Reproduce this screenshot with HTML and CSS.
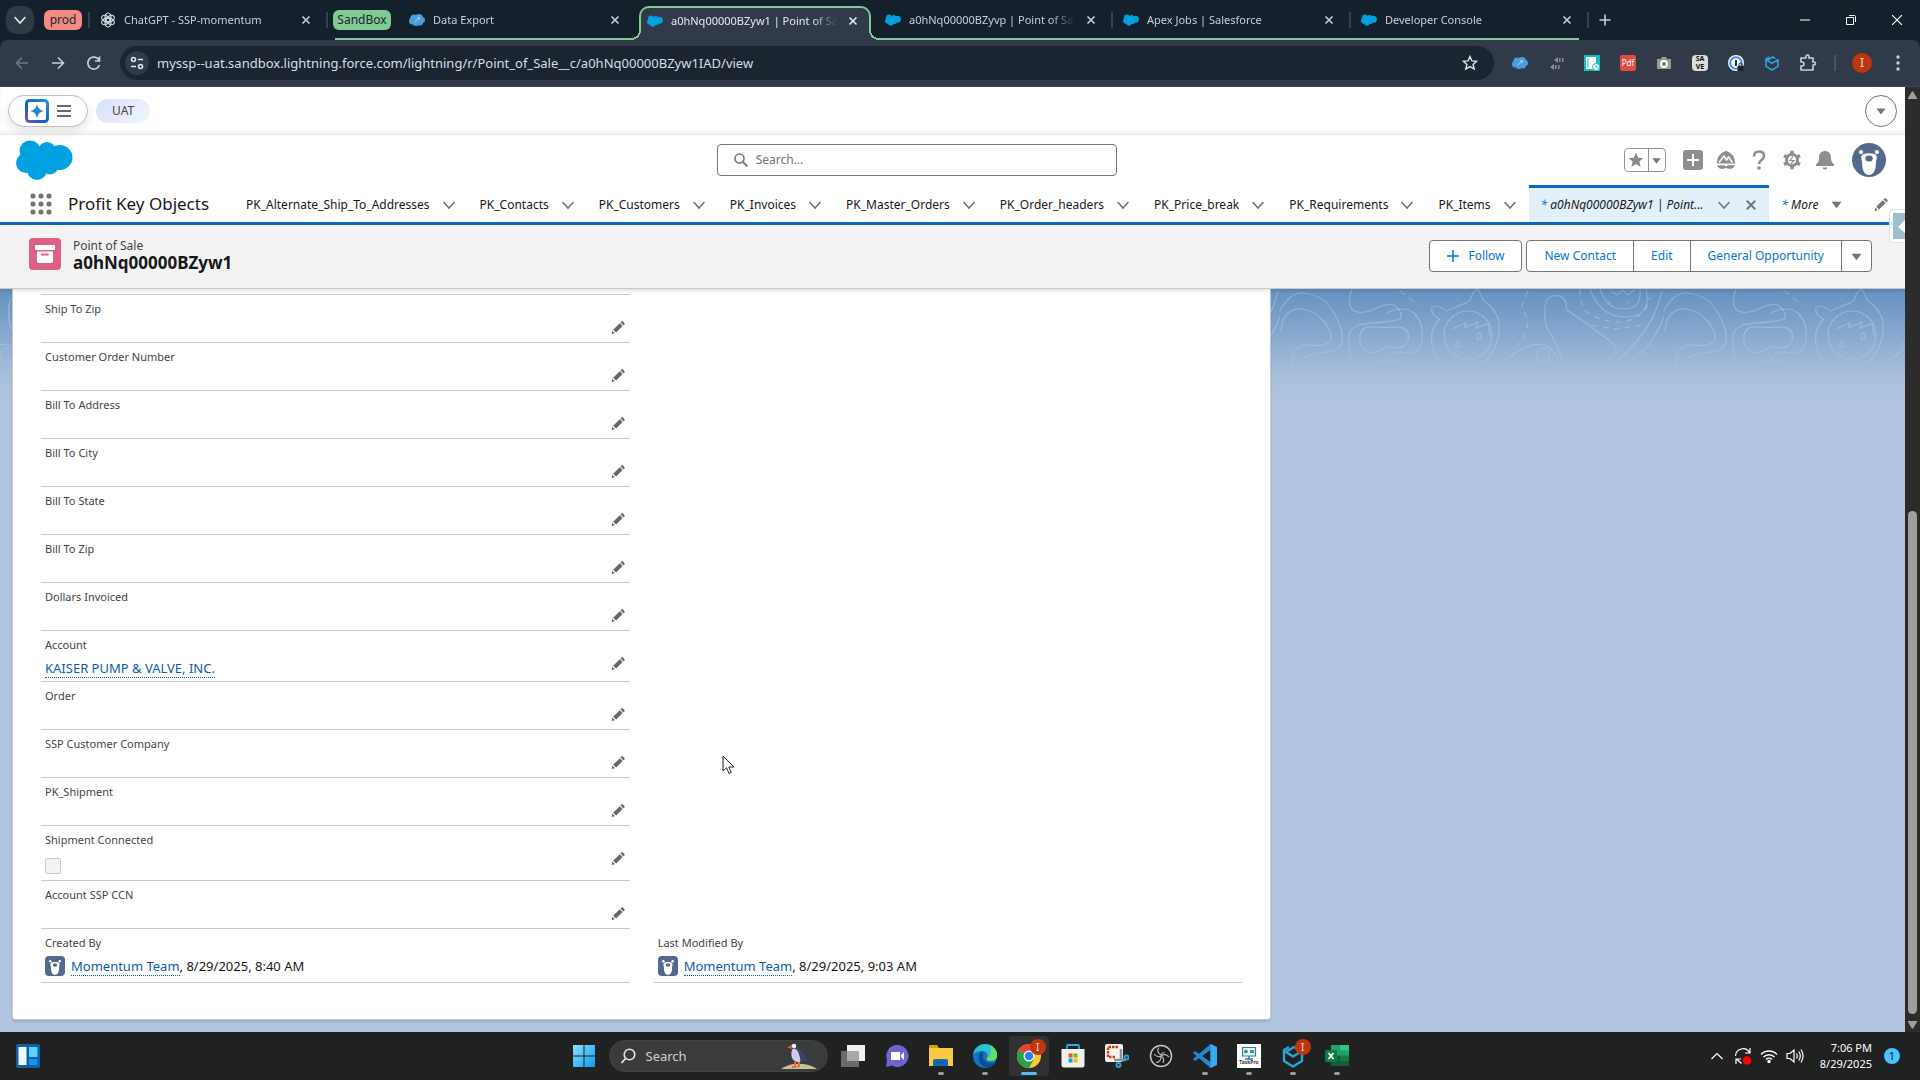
FILE: index.html
```
<!DOCTYPE html>
<html lang="en">
<head>
    <meta charset="UTF-8">
    <meta name="viewport" content="width=device-width, initial-scale=1.0">
    <title>a0hNq00000BZyw1 | Point of Sale | Salesforce</title>
    <link rel="stylesheet" href="styles.css">
</head>
<body>

<!-- Shared icons -->
<svg class="sprite" aria-hidden="true">
    <symbol id="cloud" viewBox="0 0 57 40">
        <g fill="#00a1e0"><circle cx="14" cy="11" r="10.5"/><circle cx="31" cy="11" r="9"/><circle cx="44" cy="17.500" r="12.500"/><circle cx="10" cy="23" r="10"/><circle cx="21" cy="30" r="10"/><circle cx="34" cy="26" r="8.500"/><path d="M12 10h28v18H12z"/></g>
    </symbol>
    <symbol id="inspector" viewBox="0 0 16 16">
        <g fill="#4b9ddb"><circle cx="5" cy="6" r="3.500"/><circle cx="10" cy="6" r="4"/><circle cx="13" cy="8" r="3"/><circle cx="3.500" cy="9" r="3.500"/><circle cx="7" cy="10.500" r="3.500"/><circle cx="11" cy="10.500" r="3"/></g>
        <path d="M6 10l4-4M8 6l2.500-.5L10 8" fill="none" stroke="#a9d5f5"/>
    </symbol>
    <symbol id="close" viewBox="0 0 10 10"><path d="M1.500 1.500l7 7M8.500 1.500l-7 7" fill="none" stroke="currentColor" stroke-width="1.600"/></symbol>
    <symbol id="chevron" viewBox="0 0 12 12"><path d="M1 3.500l5 5.500 5-5.500" fill="none" stroke="currentColor" stroke-width="1.600" stroke-linecap="round"/></symbol>
    <symbol id="caret" viewBox="0 0 10 10"><path d="M.5 2.500h9L5 8.500z" fill="currentColor"/></symbol>
    <symbol id="pencil" viewBox="0 0 14 14"><path d="M.7 13.300l.6-3.600L3.800 12zM2.200 8.800L8.700 2.200l2.900 2.900-6.500 6.500zM9.500 1.500l.9-.9c.5-.5 1-.5 1.400-.1l1.600 1.600c.4.4.4 1 0 1.400l-.9.9z" fill="currentColor"/></symbol>
    <symbol id="bear" viewBox="0 0 32 32">
        <path d="M0 0h32v32H0z" fill="#54698d"/>
        <g fill="#fff"><circle cx="8.500" cy="8.500" r="2"/><circle cx="23.500" cy="8.500" r="2"/><path d="M9 12c2-3 12-3 14 0 1 2-.5 4-.5 7 0 6-2 11-6.500 11S9.500 25 9.500 19c0-3-1.500-5-.5-7z"/></g>
        <ellipse cx="16" cy="14.500" rx="3.500" ry="2.800" fill="#54698d"/>
    </symbol>
    <symbol id="cube" viewBox="0 0 24 24"><path d="M8 3L3 6v11l9 5.500 9-5.500V7l-9 5.500L5 8l8-5 4 2.500" fill="none" stroke="#28a6dc" stroke-width="2.400" stroke-linejoin="round"/></symbol>
</svg>

<!-- Browser -->
<header class="browser">
    <div class="tab-strip">
        <button class="tab-search" aria-label="Search tabs"><svg width="12" height="12"><use href="#chevron"/></svg></button>
        <button class="chip chip-prod">prod</button>
        <i class="tab-sep"></i>
        <div class="tab">
            <svg class="fav" viewBox="0 0 16 16"><g fill="none" stroke="#d5dae2" stroke-width="1.200"><ellipse cx="8" cy="5.500" rx="3" ry="4.500"/><ellipse cx="8" cy="5.500" rx="3" ry="4.500" transform="rotate(60 8 8)"/><ellipse cx="8" cy="5.500" rx="3" ry="4.500" transform="rotate(120 8 8)"/><ellipse cx="8" cy="10.500" rx="3" ry="4.500"/><ellipse cx="8" cy="10.500" rx="3" ry="4.500" transform="rotate(60 8 8)"/><ellipse cx="8" cy="10.500" rx="3" ry="4.500" transform="rotate(120 8 8)"/></g></svg>
            <span class="tab-title">ChatGPT - SSP-momentum</span>
            <button class="tab-close" aria-label="Close"><svg width="10" height="10"><use href="#close"/></svg></button>
        </div>
        <i class="tab-sep"></i>
        <div class="tab-group">
            <button class="chip chip-sandbox">SandBox</button>
            <div class="tab">
                <svg class="fav"><use href="#inspector"/></svg>
                <span class="tab-title">Data Export</span>
                <button class="tab-close" aria-label="Close"><svg width="10" height="10"><use href="#close"/></svg></button>
            </div>
            <div class="tab active">
                <svg class="fav"><use href="#cloud"/></svg>
                <span class="tab-title">a0hNq00000BZyw1 | Point of Sa</span>
                <button class="tab-close" aria-label="Close"><svg width="10" height="10"><use href="#close"/></svg></button>
            </div>
            <div class="tab">
                <svg class="fav"><use href="#cloud"/></svg>
                <span class="tab-title">a0hNq00000BZyvp | Point of Sa</span>
                <button class="tab-close" aria-label="Close"><svg width="10" height="10"><use href="#close"/></svg></button>
            </div>
            <i class="tab-sep"></i>
            <div class="tab">
                <svg class="fav"><use href="#cloud"/></svg>
                <span class="tab-title">Apex Jobs | Salesforce</span>
                <button class="tab-close" aria-label="Close"><svg width="10" height="10"><use href="#close"/></svg></button>
            </div>
            <i class="tab-sep"></i>
            <div class="tab last">
                <svg class="fav"><use href="#cloud"/></svg>
                <span class="tab-title">Developer Console</span>
                <button class="tab-close" aria-label="Close"><svg width="10" height="10"><use href="#close"/></svg></button>
            </div>
        </div>
        <i class="tab-sep"></i>
        <button class="new-tab" aria-label="New tab"><svg width="12" height="12" viewBox="0 0 12 12"><path d="M6 .5v11M.5 6h11" stroke="currentColor" stroke-width="1.600"/></svg></button>
        <div class="window-buttons">
            <button aria-label="Minimize"><svg width="10" height="10" viewBox="0 0 10 10"><path d="M0 5h10" stroke="#fff"/></svg></button>
            <button aria-label="Restore"><svg width="10" height="10" viewBox="0 0 10 10"><path d="M.5 2.500h7v7h-7zM3 .5h5.500q1 0 1 1V7" fill="none" stroke="#fff"/></svg></button>
            <button aria-label="Close window"><svg width="10" height="10" viewBox="0 0 10 10"><path d="M0 0l10 10M10 0L0 10" stroke="#fff" stroke-width="1.200"/></svg></button>
        </div>
    </div>

    <div class="toolbar">
        <button class="tool dim" aria-label="Back"><svg width="14" height="14" viewBox="0 0 14 14"><path d="M13 7H1.500M7 1.500L1.500 7 7 12.500" fill="none" stroke="currentColor" stroke-width="1.600"/></svg></button>
        <button class="tool" aria-label="Forward"><svg width="14" height="14" viewBox="0 0 14 14"><path d="M1 7h11.500M7 1.500L12.500 7 7 12.500" fill="none" stroke="currentColor" stroke-width="1.600"/></svg></button>
        <button class="tool" aria-label="Reload"><svg width="14" height="14" viewBox="0 0 14 14"><path d="M12 4A6 6 0 1 0 12.500 9M12.500 .5V5H8" fill="none" stroke="currentColor" stroke-width="1.700"/></svg></button>
        <div class="omnibox">
            <button class="site-info" aria-label="Site information"><svg width="14" height="14" viewBox="0 0 14 14"><g fill="none" stroke="#dfe4ec" stroke-width="1.600"><circle cx="3.500" cy="3.500" r="2"/><path d="M8 3.500h5M1 10.500h5"/><circle cx="10.500" cy="10.500" r="2"/></g></svg></button>
            <input type="text" aria-label="Address" value="myssp--uat.sandbox.lightning.force.com/lightning/r/Point_of_Sale__c/a0hNq00000BZyw1IAD/view">
            <button class="bookmark" aria-label="Bookmark"><svg width="16" height="16" viewBox="0 0 16 16"><path d="M8 1.500l1.900 4.400 4.800.4-3.600 3.100 1.100 4.700L8 11.600l-4.200 2.500 1.100-4.700L1.300 6.300l4.800-.4z" fill="none" stroke="#dfe4ec" stroke-width="1.400"/></svg></button>
        </div>
        <div class="extensions">
            <button aria-label="Salesforce Inspector"><svg width="16" height="16"><use href="#inspector"/></svg></button>
            <button aria-label="Code"><svg width="16" height="16" viewBox="0 0 16 16"><path d="M10 2L6 5l4 3zM6 9l-4 3 4 3zM11 3h1.500v4H11zM14 3h1.500v4H14zM7 10h1.500v4H7zM10 10h1.500v4H10z" fill="#8d8d8d"/></svg></button>
            <button aria-label="Tab saver"><svg width="16" height="16" viewBox="0 0 16 16"><path d="M0 0h16v16H0z" fill="#12bdc2"/><path d="M2 2h10v12H2z" fill="#fff"/><path d="M4 3v10" stroke="#12bdc2"/><circle cx="12" cy="12" r="3.500" fill="#fff" stroke="#12bdc2"/><path d="M12 10v2h2" fill="none" stroke="#12bdc2"/></svg></button>
            <button class="ext-pdf">Pdf</button>
            <button aria-label="Screenshot"><svg width="16" height="16" viewBox="0 0 16 16"><path d="M1 4h3.500L6 2h4l1.500 2H15v10H1z" fill="#999"/><circle cx="8" cy="9" r="3" fill="#777" stroke="#fff" stroke-width="1.800"/></svg></button>
            <button class="ext-save">SA<br>VE</button>
            <button aria-label="Password manager"><svg width="16" height="16" viewBox="0 0 16 16"><circle cx="8" cy="8" r="8" fill="#fff"/><circle cx="8" cy="8" r="5.800" fill="#fff" stroke="#3b8ee6" stroke-width="2"/><path d="M8 5v6" stroke="#234" stroke-width="2"/><path d="M9.500 11h6v5h-6z" fill="#222"/><path d="M11 11V9.500a1.500 1.500 0 0 1 3 0V11" fill="none" stroke="#222"/></svg></button>
            <button aria-label="Cube"><svg width="16" height="16"><use href="#cube"/></svg></button>
            <button aria-label="Extensions"><svg width="18" height="18" viewBox="0 0 18 18"><path d="M2 4h5V2.500a1.500 1.500 0 0 1 3 0V4h4v4h1a1.500 1.500 0 0 1 0 3h-1v5H2v-4h1a2 2 0 0 0 0-4H2z" fill="none" stroke="#c5cfdd" stroke-width="1.600"/></svg></button>
        </div>
        <i class="tool-sep"></i>
        <button class="profile">I</button>
        <button class="kebab" aria-label="Menu"><svg width="4" height="16" viewBox="0 0 4 16"><g fill="#c5cfdd"><circle cx="2" cy="2" r="1.700"/><circle cx="2" cy="8" r="1.700"/><circle cx="2" cy="14" r="1.700"/></g></svg></button>
    </div>
</header>

<!-- Web page -->
<div class="viewport">
    <div class="page">
        <div class="org-bar">
            <button class="org-menu" aria-label="Organization menu">
                <svg width="24" height="24" viewBox="0 0 24 24"><defs><linearGradient id="og" x1="0" y1="1" x2="1" y2="0"><stop offset="0" stop-color="#7e4cc0"/><stop offset=".4" stop-color="#0b5fd0"/><stop offset="1" stop-color="#2c8fd5"/></linearGradient></defs><rect x="1.500" y="1.500" width="21" height="21" rx="3" fill="#fff" stroke="url(#og)" stroke-width="3"/><path d="M12 5q1 6 7 7-6 1-7 7-1-6-7-7 6-1 7-7z" fill="#2586d9"/></svg>
                <svg width="14" height="14" viewBox="0 0 14 14"><path d="M0 2h14M0 7h14M0 12h14" stroke="#6b6b6b" stroke-width="2"/></svg>
            </button>
            <span class="org-chip">UAT</span>
            <button class="org-toggle" aria-label="Collapse"><svg width="10" height="10"><use href="#caret"/></svg></button>
        </div>

        <div class="sf-header">
            <div><svg class="logo" width="57" height="40"><use href="#cloud"/></svg></div>
            <label class="search">
                <svg width="14" height="14" viewBox="0 0 14 14"><circle cx="5.500" cy="5.500" r="4.500" fill="none" stroke="#747474" stroke-width="1.600"/><path d="M9 9l4.500 4.500" stroke="#747474" stroke-width="1.800"/></svg>
                <input type="search" placeholder="Search..." aria-label="Search">
            </label>
            <div class="global-actions">
                <div class="fav-group">
                    <button aria-label="Favorite"><svg width="16" height="16" viewBox="0 0 16 16"><path d="M8 .5l2.100 5.200 5.400.3-4.200 3.500 1.400 5.500L8 12l-4.700 3 1.400-5.500L.5 6l5.400-.3z" fill="#8a8a8a"/></svg></button>
                    <button aria-label="Favorites list"><svg width="9" height="9"><use href="#caret"/></svg></button>
                </div>
                <button aria-label="Create"><svg width="20" height="20" viewBox="0 0 20 20"><rect width="20" height="20" rx="3" fill="#8e8e8e"/><path d="M10 4v12M4 10h12" stroke="#fff" stroke-width="2"/></svg></button>
                <button aria-label="Guidance"><svg width="20" height="20" viewBox="0 0 20 20"><path d="M.8 13.500Q1 4 10 .8q9 3.200 9.200 12.700z" fill="#8e8e8e"/><path d="M3 12.500L8 6l2.500 4L12.500 7l4 5.500" fill="none" stroke="#fff" stroke-width="1.500"/><path d="M1 15.200h7l2 1.300 2-1.300h7q-1 2.500-3 3.500h-4l-2-1-2 1H4q-2-1-3-3.500z" fill="#8e8e8e"/></svg></button>
                <button aria-label="Help"><svg width="20" height="20" viewBox="0 0 20 20"><path d="M5 6.500C5 3 7 1.500 10 1.500s5 1.800 5 4.500c0 4-5 4-5 8" fill="none" stroke="#8e8e8e" stroke-width="2.600"/><circle cx="10" cy="18" r="1.800" fill="#8e8e8e"/></svg></button>
                <button aria-label="Setup"><svg width="20" height="20" viewBox="0 0 20 20"><circle cx="10" cy="10" r="5.500" fill="none" stroke="#8e8e8e" stroke-width="3"/><path d="M10 .8v4M10 15.200v4M2 5.400l3.500 2M14.500 12.600l3.500 2M2 14.600l3.500-2M14.500 7.400l3.500-2" stroke="#8e8e8e" stroke-width="3.500"/><path d="M11 6.500l-3 4h4L9 13.500" fill="none" stroke="#8e8e8e" stroke-width="1.200"/></svg></button>
                <button aria-label="Notifications"><svg width="20" height="20" viewBox="0 0 20 20"><path d="M10 1c4 0 6 3 6 6.500 0 4 1 5 3 7v1.500H1v-1.500c2-2 3-3 3-7C4 4 6 1 10 1zM7.500 17.500h5q-.5 2-2.500 2t-2.500-2z" fill="#8e8e8e"/></svg></button>
                <button class="user" aria-label="User"><svg width="34" height="34"><use href="#bear"/></svg></button>
            </div>
        </div>

        <nav class="sf-nav">
            <button class="waffle" aria-label="App launcher"><svg width="22" height="22" viewBox="0 0 22 22"><g fill="#747474"><circle cx="3" cy="3" r="2.600"/><circle cx="11" cy="3" r="2.600"/><circle cx="19" cy="3" r="2.600"/><circle cx="3" cy="11" r="2.600"/><circle cx="11" cy="11" r="2.600"/><circle cx="19" cy="11" r="2.600"/><circle cx="3" cy="19" r="2.600"/><circle cx="11" cy="19" r="2.600"/><circle cx="19" cy="19" r="2.600"/></g></svg></button>
            <span class="app-name">Profit Key Objects</span>
            <a class="nav-item" href="#">PK_Alternate_Ship_To_Addresses <svg width="12" height="12"><use href="#chevron"/></svg></a>
            <a class="nav-item" href="#">PK_Contacts <svg width="12" height="12"><use href="#chevron"/></svg></a>
            <a class="nav-item" href="#">PK_Customers <svg width="12" height="12"><use href="#chevron"/></svg></a>
            <a class="nav-item" href="#">PK_Invoices <svg width="12" height="12"><use href="#chevron"/></svg></a>
            <a class="nav-item" href="#">PK_Master_Orders <svg width="12" height="12"><use href="#chevron"/></svg></a>
            <a class="nav-item" href="#">PK_Order_headers <svg width="12" height="12"><use href="#chevron"/></svg></a>
            <a class="nav-item" href="#">PK_Price_break <svg width="12" height="12"><use href="#chevron"/></svg></a>
            <a class="nav-item" href="#">PK_Requirements <svg width="12" height="12"><use href="#chevron"/></svg></a>
            <a class="nav-item" href="#">PK_Items <svg width="12" height="12"><use href="#chevron"/></svg></a>
            <a class="nav-item current" href="#"><span><b>*</b> a0hNq00000BZyw1 | Point...</span> <svg width="12" height="12"><use href="#chevron"/></svg><svg width="12" height="12"><use href="#close"/></svg></a>
            <a class="nav-item more" href="#"><span><b>*</b> More</span> <svg width="11" height="11"><use href="#caret"/></svg></a>
            <button class="nav-edit" aria-label="Edit nav items"><svg width="14" height="14"><use href="#pencil"/></svg></button>
            <button class="side-tab" aria-label="Open panel"><svg width="12" height="26" viewBox="0 0 12 26"><path d="M0 0h12v26H0z" fill="#9dbfd0"/><path d="M12 7l-7 7 7 6z" fill="#fff"/></svg></button>
        </nav>

        <div class="record-header">
            <svg class="record-icon" width="32" height="32" viewBox="0 0 32 32"><rect width="32" height="32" rx="4" fill="#dd6085"/><rect x="6" y="7" width="20" height="5" rx="1" fill="#fff"/><path d="M8 13.500h16V23q0 2-2 2H10q-2 0-2-2z" fill="#fff"/><path d="M13 16.500h6" stroke="#dd6085" stroke-width="2" stroke-linecap="round"/></svg>
            <div class="record-name">
                <p>Point of Sale</p>
                <h1>a0hNq00000BZyw1</h1>
            </div>
            <button class="btn follow"><svg width="12" height="12" viewBox="0 0 12 12"><path d="M6 0v12M0 6h12" stroke="#0176d3" stroke-width="1.500"/></svg>Follow</button>
            <div class="btn-group">
                <button class="btn">New Contact</button>
                <button class="btn">Edit</button>
                <button class="btn">General Opportunity</button>
                <button class="btn btn-more" aria-label="More actions"><svg width="11" height="11"><use href="#caret"/></svg></button>
            </div>
        </div>

        <main class="record-body">
            <svg class="backdrop" width="100%" height="107" aria-hidden="true">
                <defs>
                    <pattern id="contours" x="128" y="0" width="384" height="107" patternUnits="userSpaceOnUse">
                        <g fill="none" stroke="#fff" stroke-opacity=".24" stroke-width="1.200">
                            <path d="M-4 30Q8 2 24 4q18 2 26 14c12 16 16 34 8 42-8 6-40 0-38 20 2 12 12 16 10 30"/>
                            <path d="M1 42q2-24 22-22c14 2 26 16 28 26 2 8-8 12-20 10-20-2-22 18-16 30q4 8 2 24"/>
                            <path d="M72 0q-6 16 2 22c14 6 28-10 40-6q10 8 6 14c-12 6-46 0-50 14s2 20 0 30q-4 14-20 20"/>
                            <path d="M80 46q2-10 16-8c10 2 28-4 32 6 2 8-4 18-16 14-10-2-12 8-22 6q-10-4-10-12z"/>
                            <path d="M106 24q18-8 28 0 10 10 8 26-2 16-16 14c-14-4-24 8-20 14s22-2 32 4q8 8 6 26"/>
                            <path d="M98 74c14-8 20 2 34 2q8 6 4 14c-10 6-20-2-34 0q-8-4-4-16zM28 110q0-16 12-16t14 16M64 108q2-14 14-14t14 14"/>
                            <path d="M160 30q-10-4-8-12 8-2 14 4l24-10q2-10 8-12l6 12q20 14 14 38c-6 22-22 34-42 30-18-4-26-18-24-36q2-8 8-14z"/>
                            <circle cx="188" cy="46" r="24"/>
                            <path d="M172 40l14-6-2 5 14-6-2 6 12-4 2 12M179 52q-3 0-3 4t3 2 0-6M200 44q-3 0-3 4t3 2 0-6"/>
                            <path d="M120 2l18 14M218 98q12-14 14-30l8-16q10-10 6-24l-4-12 6-14" stroke-dasharray="6 5"/>
                            <path d="M200 104q20-30 32-38 30-20 42-2 14 20-2 32l-24 14"/>
                            <circle cx="263" cy="66" r="6.500"/>
                            <path d="M266 12q6-8 16-4 6 6 4 12c8 8 24 14 30 22 12 8 22 14 20 22l-16 16c-10 10-20 16-28 14-10-20-12-34-22-50q-8-12-4-32z"/>
                            <path d="M310 0q10 28 36 28T366 0"/><path d="M320 0q6 20 24 20T360 0M331 2l6 4 6-5 5 5 6-5M330 12v4M348 12v4"/>
                            <path d="M300 0q0 18 8 24 20 12 38 8 20-4 24-24M312 36l24 4 26-4" stroke-dasharray="6 5"/>
                            <path d="M326 107q4-30 26-50 22-22 30-55M336 107q2-26 28-46 10-8 24-42"/>
                        </g>
                    </pattern>
                    <linearGradient id="sky" x1="0" y1="0" x2="0" y2="1"><stop offset="0" stop-color="#6491c1"/><stop offset=".8" stop-color="#a6bedc"/><stop offset="1" stop-color="#b0c4df"/></linearGradient>
                    <linearGradient id="fade" x1="0" y1="0" x2="0" y2="1"><stop offset="0" stop-color="#fff"/><stop offset=".4" stop-color="#fff"/><stop offset=".82" stop-color="#000"/></linearGradient>
                    <mask id="fademask"><rect width="100%" height="107" fill="url(#fade)"/></mask>
                </defs>
                <rect width="100%" height="107" fill="url(#sky)"/>
                <rect width="100%" height="107" fill="url(#contours)" mask="url(#fademask)"/>
            </svg>

            <section class="card">
                <div class="field"><span class="label">Ship To Zip</span><button aria-label="Edit Ship To Zip"><svg width="14" height="14"><use href="#pencil"/></svg></button></div>
                <div class="field"><span class="label">Customer Order Number</span><button aria-label="Edit Customer Order Number"><svg width="14" height="14"><use href="#pencil"/></svg></button></div>
                <div class="field"><span class="label">Bill To Address</span><button aria-label="Edit Bill To Address"><svg width="14" height="14"><use href="#pencil"/></svg></button></div>
                <div class="field"><span class="label">Bill To City</span><button aria-label="Edit Bill To City"><svg width="14" height="14"><use href="#pencil"/></svg></button></div>
                <div class="field"><span class="label">Bill To State</span><button aria-label="Edit Bill To State"><svg width="14" height="14"><use href="#pencil"/></svg></button></div>
                <div class="field"><span class="label">Bill To Zip</span><button aria-label="Edit Bill To Zip"><svg width="14" height="14"><use href="#pencil"/></svg></button></div>
                <div class="field"><span class="label">Dollars Invoiced</span><button aria-label="Edit Dollars Invoiced"><svg width="14" height="14"><use href="#pencil"/></svg></button></div>
                <div class="field"><span class="label">Account</span><div class="value"><a href="#">KAISER PUMP &amp; VALVE, INC.</a></div><button aria-label="Edit Account"><svg width="14" height="14"><use href="#pencil"/></svg></button></div>
                <div class="field"><span class="label">Order</span><button aria-label="Edit Order"><svg width="14" height="14"><use href="#pencil"/></svg></button></div>
                <div class="field"><span class="label">SSP Customer Company</span><button aria-label="Edit SSP Customer Company"><svg width="14" height="14"><use href="#pencil"/></svg></button></div>
                <div class="field"><span class="label">PK_Shipment</span><button aria-label="Edit PK_Shipment"><svg width="14" height="14"><use href="#pencil"/></svg></button></div>
                <div class="field"><label class="label" for="shipment-connected">Shipment Connected</label><div class="value check"><input type="checkbox" id="shipment-connected" disabled></div><button aria-label="Edit Shipment Connected"><svg width="14" height="14"><use href="#pencil"/></svg></button></div>
                <div class="field"><span class="label">Account SSP CCN</span><button aria-label="Edit Account SSP CCN"><svg width="14" height="14"><use href="#pencil"/></svg></button></div>
                <div class="field"><span class="label">Created By</span><div class="value person"><svg width="20" height="20"><use href="#bear"/></svg><span><a href="#">Momentum Team</a>, 8/29/2025, 8:40 AM</span></div></div>
                <div class="field right"><span class="label">Last Modified By</span><div class="value person"><svg width="20" height="20"><use href="#bear"/></svg><span><a href="#">Momentum Team</a>, 8/29/2025, 9:03 AM</span></div></div>
            </section>
        </main>
    </div>

    <div class="scrollbar">
        <svg width="11" height="9" viewBox="0 0 11 9"><path d="M4.500 1q1-1.500 2 0L10.500 8h-10z" fill="#9f9f9f"/></svg>
        <div class="track"><div class="thumb"></div></div>
        <svg width="11" height="9" viewBox="0 0 11 9"><path d="M4.500 8q1 1.500 2 0L10.500 1h-10z" fill="#9f9f9f"/></svg>
    </div>

    <svg class="pointer" width="13" height="20" viewBox="0 0 13 20"><path d="M1 1v15l3.500-3.200L7 18.500l2.200-1L6.800 12H12z" fill="#fff" stroke="#222"/></svg>
</div>

<!-- Taskbar -->
<footer class="taskbar">
    <div class="task-left">
        <button aria-label="Widgets"><svg width="24" height="24" viewBox="0 0 24 24"><rect width="24" height="24" rx="2" fill="#0b62a8"/><path d="M2.500 3h8v18h-8z" fill="#f2f7fb"/><path d="M13 3h8.500v10H13z" fill="#5fd0ff"/><path d="M13 15h8.500v6H13z" fill="#1592ea"/></svg></button>
    </div>

    <div class="task-center">
        <button class="task" aria-label="Start"><svg width="24" height="24" viewBox="0 0 24 24"><defs><linearGradient id="win" x1="0" y1="0" x2="1" y2="1"><stop offset="0" stop-color="#8be0fb"/><stop offset="1" stop-color="#0a9cf5"/></linearGradient></defs><path d="M1 1h10.500v10.500H1zM12.500 1H23v10.500H12.500zM1 12.500h10.500V23H1zM12.500 12.500H23V23H12.500z" fill="url(#win)"/></svg></button>
        <label class="task-search">
            <svg width="16" height="16" viewBox="0 0 16 16"><circle cx="9.500" cy="6.500" r="5.300" fill="none" stroke="#e6e6e6" stroke-width="1.600"/><path d="M5.500 10.500L1.500 15" stroke="#e6e6e6" stroke-width="1.800"/></svg>
            <input type="text" placeholder="Search" aria-label="Search Windows">
            <svg width="36" height="28" viewBox="0 0 36 28"><path d="M0 27q4-3 12-5 16-1 24 5z" fill="#cdbd98"/><path d="M11 2c3-2 6 0 6 4 5 3 8 8 10 14l-5-1c-2 4-9 4-11-2-2-5 0-9 0-15z" fill="#3d4560"/><path d="M11.500 7c3-1 5 1 6 4s3 8 1 9c-7 1-10-7-7-13z" fill="#d4c8ee"/><circle cx="13" cy="4" r="2.200" fill="#f2f2f5"/><path d="M11 2.500L6.500 5.500l4 1.500z" fill="#f05a32"/><path d="M14 20v5M18 20v4M11 25h4M16 24h3" stroke="#f06a3c" stroke-width="2"/></svg>
        </label>
        <button class="task" aria-label="Task view"><svg width="24" height="22" viewBox="0 0 24 22"><path d="M6 0h18v16H6z" fill="#f0f0f0"/><path d="M0 6h18v16H0z" fill="#6a6a6a"/><path d="M6 6h12v10H6z" fill="#a8a8a8"/></svg></button>
        <button class="task" aria-label="Chat"><svg width="24" height="24" viewBox="0 0 24 24"><path d="M12 1a11 11 0 1 1-5 20.500L1 23l1-7A11 11 0 0 1 12 1z" fill="#6d66cc"/><path d="M6 8h9v8H6zM16 11l3-3v8l-3-3z" fill="#fff"/></svg></button>
        <button class="task open" aria-label="File Explorer"><svg width="24" height="24" viewBox="0 0 24 24"><path d="M0 2q0-1 1-1h7l2 3v4H0z" fill="#d99b12"/><path d="M0 4h24v18H0z" fill="#fcca3e"/><path d="M4 22v-5q0-2 2-2h11q2 0 2 2v5z" fill="#0f6cbd"/><path d="M8 18.500h7" stroke="#0a4f90"/></svg></button>
        <button class="task open" aria-label="Edge"><svg width="24" height="24" viewBox="0 0 24 24"><circle cx="12" cy="12" r="12" fill="#1272c4"/><path d="M.2 11C1 4 6 0 12 0c8 0 12 6 12 11 0 4-3 6-6 6-4 0-5-2-4-3 2-4-1-7-5-7s-8 2-8.800 4z" fill="#2cc3c8"/><path d="M17 1c5 3 7 6 7 10 0 4-3 6-6 6-4 0-5-2-4-3 3-1 6-6 3-13z" fill="#6bdc62"/><path d="M8 8c-4 4-3 13 5 15.500 4 .5 8-2 9.500-5C16 21 9 17 10 11q1-3-2-3z" fill="#0b4c94"/></svg></button>
        <button class="task current" aria-label="Chrome"><svg width="24" height="24" viewBox="0 0 24 24"><circle cx="12" cy="12" r="12" fill="#fcc934"/><path d="M12 12L1.600 6A12 12 0 0 1 22.400 6z" fill="#ea4335"/><path d="M12 12L1.600 6A12 12 0 0 0 12 24l5-9z" fill="#2aa149"/><path d="M12 6.500h10.600" stroke="#ea4335"/><circle cx="12" cy="12" r="5.500" fill="#fff"/><circle cx="12" cy="12" r="4.300" fill="#2d7ff0"/></svg><span class="badge">I</span></button>
        <button class="task" aria-label="Store"><svg width="24" height="24" viewBox="0 0 24 24"><path d="M6 6V2q0-1 1-1h10q1 0 1 1v4" fill="none" stroke="#2fa8e8" stroke-width="1.800"/><path d="M.5 5h23v16q0 2.500-2.500 2.500H3Q.5 23.500.5 21z" fill="#f1f1f1"/><path d="M7.500 9.500h4v4h-4z" fill="#f25022"/><path d="M12.500 9.500h4v4h-4z" fill="#7fba00"/><path d="M7.500 14.500h4v4h-4z" fill="#00a4ef"/><path d="M12.500 14.500h4v4h-4z" fill="#ffb900"/></svg></button>
        <button class="task" aria-label="Snipping Tool"><svg width="24" height="24" viewBox="0 0 24 24"><rect width="18" height="18" rx="2" fill="#f4f4f4"/><path d="M13 3H3v10h8" fill="none" stroke="#d83b01" stroke-width="2.500" stroke-dasharray="2.500 1"/><path d="M16 5v12M9 16h12" stroke="#8c9297" stroke-width="2.500"/><g fill="none" stroke="#2fa0dd" stroke-width="2"><circle cx="13.500" cy="21" r="2"/><circle cx="21.500" cy="13.500" r="2"/></g></svg></button>
        <button class="task" aria-label="OBS"><svg width="24" height="24" viewBox="0 0 24 24"><circle cx="12" cy="12" r="10.500" fill="#1c1b1e" stroke="#c4c4c4" stroke-width="1.500"/><path d="M9.500 3.500q-2 5 2.500 7.500M20 13q-4-4-8-1M7 18.500q5 0 5-6.500M12 11q1-3 4-2M12 12q4 2 2 7M12 12q-4 2-7-2" fill="none" stroke="#b4b4b4" stroke-width="1.200"/></svg></button>
        <button class="task open" aria-label="VS Code"><svg width="24" height="24" viewBox="0 0 24 24"><path d="M17.500 0L24 3v18l-6.500 3L0 9l2-2 15.500 11V6L2 17l-2-2z" fill="#1f8ad2"/><path d="M17.500 0L24 3v18l-6.500 3z" fill="#36a9f0"/></svg></button>
        <button class="task open" aria-label="TaskPro"><svg width="24" height="24" viewBox="0 0 24 24"><path d="M0 0h24v24H0z" fill="#fff"/><path d="M5.500 3.500h13v8.500h-13z" fill="#eaf5fb" stroke="#2f78b4" stroke-width="1.200"/><path d="M7 7q2-3 4 0 0 3-4 2zM13 6h4v3h-4z" fill="#3aa05a"/><path d="M12 12v3M8 15h8" stroke="#2f78b4" stroke-width="1.500"/><text x="12" y="20" font-size="5" text-anchor="middle" font-weight="700" fill="#333">TaskPro</text></svg></button>
        <button class="task open" aria-label="Cube"><svg width="24" height="24"><use href="#cube"/></svg><span class="badge">I</span></button>
        <button class="task open" aria-label="Excel"><svg width="24" height="24" viewBox="0 0 24 24"><path d="M6 1h18v21H6z" fill="#21a366"/><path d="M15 1h9v5.300h-9z" fill="#33c481"/><path d="M6 11.500h9V22H6z" fill="#185c37"/><path d="M15 11.500h9V17h-9z" fill="#107c41"/><path d="M15 17h9v5h-9z" fill="#185c37"/><rect y="6" width="12" height="12" rx="1" fill="#107c41"/><path d="M3.500 9l5 6M8.500 9l-5 6" stroke="#fff" stroke-width="1.700"/></svg></button>
    </div>

    <div class="tray">
        <button aria-label="Hidden icons"><svg width="12" height="12" viewBox="0 0 12 12"><path d="M.5 9L6 3.500 11.500 9" fill="none" stroke="#fff" stroke-width="1.200"/></svg></button>
        <button aria-label="Updates"><svg width="18" height="18" viewBox="0 0 18 18"><path d="M1.500 9a7.500 7.500 0 0 1 14-3.500M16 1v5h-5M2 17v-5h5M2.500 12l5 4.500" fill="none" stroke="#fff" stroke-width="1.200"/><circle cx="13" cy="13.500" r="4.200" fill="red"/></svg></button>
        <button aria-label="Network"><svg width="18" height="16" viewBox="0 0 18 16"><g fill="none" stroke="#fff" stroke-width="1.400"><path d="M1 6.500a11 11 0 0 1 16 0M3.500 9a7.700 7.700 0 0 1 11 0M6 11.500a4.300 4.300 0 0 1 6 0"/></g><circle cx="9" cy="13.500" r="1.700" fill="#fff"/></svg></button>
        <button aria-label="Volume"><svg width="18" height="16" viewBox="0 0 18 16"><path d="M1 5.500h3l4-3.500v12l-4-3.500H1zM10.500 5.500q1.500 2.500 0 5M12.800 3.500q3 4.500 0 9M15 1.500q4 6.500 0 13" fill="none" stroke="#fff" stroke-width="1.200"/></svg></button>
        <div class="clock">7:06 PM<br>8/29/2025</div>
        <span class="notice">1</span>
    </div>
</footer>

</body>
</html>
```
FILE: styles.css
```
* {
    box-sizing: border-box;
}

body {
    margin: 0;
    height: 100vh;
    display: flex;
    flex-direction: column;
    overflow: hidden;
    font-family: "Noto Sans", "Open Sans", sans-serif;
    font-size: 12px;
    line-height: 16px;
    color: #181818;
}

button {
    font: inherit;
    color: inherit;
    background: none;
    border: none;
    padding: 0;
    margin: 0;
    cursor: pointer;
    display: flex;
    align-items: center;
    justify-content: center;
    flex: none;
}

svg {
    display: block;
    flex: none;
}

.sprite {
    position: absolute;
    width: 0;
    height: 0;
}

/* Browser */
.browser {
    flex: none;
    background-color: #15202d;
}

.tab-strip {
    display: flex;
    height: 40px;
    padding-left: 6px;
    color: #c5cfdd;
}

.tab-search {
    width: 28px;
    height: 28px;
    margin: 6px 10px 0 0;
    border-radius: 10px;
    background-color: #303a46;
    color: #e6eaf0;
}

.chip {
    height: 20px;
    margin-top: 10px;
    padding: 0 6px;
    border-radius: 6px;
    color: #20262c;
}

.chip-prod {
    width: 38px;
    margin-right: 4px;
    background-color: #f28b82;
}

.chip-sandbox {
    width: 58px;
    margin-right: 10px;
    background-color: #81c995;
}

.tab-sep {
    width: 2px;
    height: 16px;
    margin: 12px 2px 0;
    background-color: #34404d;
}

.tab-group {
    display: flex;
    position: relative;
    margin-left: 3px;
}

.tab-group::before {
    content: "";
    position: absolute;
    left: 2px;
    right: 6px;
    bottom: 0;
    height: 2px;
    background-color: #81c995;
}

.tab {
    display: flex;
    align-items: center;
    width: 232px;
    padding: 0 10px 0 8px;
    font-size: 11px;
}

.tab + .tab {
    margin-left: 6px;
}

.fav {
    width: 16px;
    height: 16px;
    margin-right: 8px;
}

.tab-title {
    flex: 1;
    overflow: hidden;
    white-space: nowrap;
    -webkit-mask-image: linear-gradient(to right, #000 85%, transparent);
    mask-image: linear-gradient(to right, #000 85%, transparent);
}

.tab-close {
    margin-left: 8px;
    width: 16px;
}

.tab.active {
    position: relative;
    height: 34px;
    margin-top: 6px;
    padding: 0 8px 6px 6px;
    border: 2px solid #81c995;
    border-bottom: none;
    border-radius: 10px 10px 0 0;
    background-color: #303a48;
    color: #e6eaf0;
}

.tab.active::before,
.tab.active::after {
    content: "";
    position: absolute;
    bottom: 0;
    width: 10px;
    height: 10px;
}

.tab.active::before {
    left: -10px;
    background: radial-gradient(circle at 0 0, #15202d 8px, #81c995 8px, #81c995 10px, #303a48 10px);
}

.tab.active::after {
    right: -10px;
    background: radial-gradient(circle at 100% 0, #15202d 8px, #81c995 8px, #81c995 10px, #303a48 10px);
}

.new-tab {
    width: 28px;
}

.window-buttons {
    display: flex;
    margin-left: auto;
}

.window-buttons button {
    width: 46px;
}

.toolbar {
    display: flex;
    align-items: center;
    height: 47px;
    padding: 0 4px;
    background-color: #303a48;
    border-bottom: 1px solid #3f4854;
    border-radius: 8px 8px 0 0;
    color: #c5cfdd;
}

.tool {
    width: 36px;
    height: 34px;
}

.dim {
    color: #707a88;
}

.omnibox {
    flex: 1;
    display: flex;
    align-items: center;
    height: 34px;
    margin: 0 8px;
    padding: 0 16px 0 5px;
    border-radius: 17px;
    background-color: #1b2531;
}

.site-info {
    width: 24px;
    height: 24px;
    border-radius: 12px;
    background-color: #303a48;
}

.omnibox input {
    flex: 1;
    margin-left: 8px;
    padding: 0;
    border: none;
    outline: none;
    background: none;
    font: inherit;
    font-size: 13px;
    color: #d8dde5;
}

.extensions {
    display: flex;
}

.extensions button {
    width: 36px;
    height: 24px;
}

.extensions .ext-pdf {
    width: 16px;
    height: 16px;
    margin: 4px 10px;
    border-radius: 2px;
    background-color: #e04b42;
    color: #fff;
    font-size: 8px;
}

.extensions .ext-save {
    width: 16px;
    height: 16px;
    margin: 4px 10px;
    border-radius: 4px;
    background-color: #dcdcdc;
    color: #111;
    font-size: 7px;
    font-weight: 700;
    line-height: 8px;
}

.tool-sep {
    width: 2px;
    height: 16px;
    margin: 0 16px 0 8px;
    background-color: #4a5563;
}

.profile {
    width: 20px;
    height: 20px;
    border-radius: 10px;
    background-color: #bf360c;
    color: #f4d3c8;
}

.kebab {
    width: 36px;
    margin-left: 8px;
}

/* Page */
.viewport {
    flex: 1;
    display: flex;
    min-height: 0;
    position: relative;
}

.page {
    flex: 1;
    display: flex;
    flex-direction: column;
    min-width: 0;
    background-color: #fff;
}

.org-bar {
    display: flex;
    align-items: center;
    flex: none;
    height: 48px;
    padding: 0 8px;
    border-bottom: 1px solid #e8e8e8;
    box-shadow: inset 0 -3px 3px #f3f3f3;
}

.org-menu {
    width: 80px;
    height: 32px;
    gap: 8px;
    border: 1px solid #c0c0c0;
    border-radius: 16px;
    background-color: #fff;
    box-shadow: 0 4px 10px rgba(0, 0, 0, 0.1);
}

.org-chip {
    margin-left: 8px;
    padding: 4px 16px;
    border-radius: 12px;
    background: linear-gradient(135deg, #d3e4fc, #ebe7fa 50%, #e6fbf8);
    color: #444;
}

.org-toggle {
    width: 32px;
    height: 32px;
    margin-left: auto;
    border: 1px solid #747474;
    border-radius: 16px;
    color: #747474;
}

.sf-header {
    flex: none;
    display: grid;
    grid-template-columns: 10fr 400px 11fr;
    align-items: center;
    height: 50px;
}

.logo {
    margin-left: 16px;
}

.search {
    display: flex;
    align-items: center;
    height: 32px;
    padding: 0 16px;
    border: 1px solid #747474;
    border-radius: 4px;
}

.search input {
    flex: 1;
    margin-left: 8px;
    padding: 0;
    border: none;
    outline: none;
    background: none;
    font: inherit;
}

.search input::placeholder {
    color: #747474;
    opacity: 1;
}

.global-actions {
    display: flex;
    align-items: center;
    justify-content: flex-end;
    gap: 13px;
    padding-right: 19px;
}

.fav-group {
    display: flex;
    height: 24px;
    margin-right: 4px;
    border: 1px solid #939393;
    border-radius: 4px;
    color: #747474;
}

.fav-group button {
    width: 23px;
}

.fav-group button + button {
    width: 17px;
    border-left: 1px solid #939393;
}

.user {
    margin-left: 4px;
    border-radius: 17px;
    overflow: hidden;
}

.sf-nav {
    flex: none;
    display: flex;
    align-items: stretch;
    height: 40px;
    border-bottom: 3px solid #0b68bd;
    position: relative;
    z-index: 2;
}

.waffle {
    width: 22px;
    margin: 0 16px 0 30px;
}

.app-name {
    width: 166px;
    font-size: 17px;
    line-height: 38px;
}

.nav-item {
    display: flex;
    align-items: center;
    gap: 13px;
    padding: 2px 13px 0 12px;
    color: #181818;
    text-decoration: none;
    white-space: nowrap;
}

.nav-item svg {
    color: #747474;
}

.nav-item b {
    color: #0176d3;
    font-weight: 400;
}

.nav-item.current {
    padding: 0 12px 1px;
    gap: 15px;
    border-top: 3px solid #0b68bd;
    background-color: #e3eff9;
    font-style: italic;
}

.nav-item.more {
    font-style: italic;
}

.nav-edit {
    width: 14px;
    margin: 3px 17px 0 auto;
    color: #747474;
}

.side-tab {
    position: absolute;
    right: 0;
    top: 24px;
    width: 16px;
    height: 34px;
    border: 1px solid #d5e3ea;
    border-right: none;
    border-radius: 4px 0 0 4px;
    background-color: rgba(255, 255, 255, 0.85);
    justify-content: flex-end;
}

.record-header {
    flex: none;
    display: flex;
    height: 64px;
    padding: 13px 33px 0 29px;
    background-color: #f3f3f3;
    border-bottom: 1px solid #c9c9c9;
    box-shadow: 0 2px 4px rgba(0, 0, 0, 0.12);
    position: relative;
    z-index: 1;
}

.record-name {
    flex: 1;
    margin-left: 12px;
}

.record-name p {
    margin: 0;
    color: #444;
}

.record-name h1 {
    margin: 0;
    font-size: 17px;
    line-height: 18px;
}

.btn {
    height: 32px;
    margin-top: 2px;
    padding: 0 17px;
    border: 1px solid #747474;
    border-radius: 4px;
    background-color: #fff;
    color: #0176d3;
}

.follow {
    gap: 9px;
    width: 93px;
    margin-right: 4px;
}

.btn-group {
    display: flex;
}

.btn-group .btn {
    border-radius: 0;
    margin-left: -1px;
}

.btn-group .btn:first-child {
    margin-left: 0;
    border-radius: 4px 0 0 4px;
}

.btn-group .btn-more {
    padding: 0 9px;
    border-radius: 0 4px 4px 0;
    color: #747474;
}

.record-body {
    flex: 1;
    min-height: 0;
    padding-left: 12px;
    background-color: #b0c4df;
    display: grid;
    grid-template-columns: 2fr 1fr;
    align-items: start;
    column-gap: 4px;
    overflow: hidden;
    position: relative;
    z-index: 0;
}

.backdrop {
    position: absolute;
    left: 0;
    top: 0;
    z-index: -1;
}

.card {
    display: grid;
    grid-template-columns: 1fr 1fr;
    column-gap: 24px;
    padding: 5px 28px 36px;
    border: 1px solid #c9c9c9;
    border-top: none;
    border-radius: 0 0 4px 4px;
    background-color: #fff;
    box-shadow: 0 2px 2px rgba(0, 0, 0, 0.12);
}

.field {
    grid-column: 1;
    display: grid;
    grid-template-columns: 1fr 14px;
    align-content: start;
    min-height: 48px;
    padding: 7px 5px 0 4px;
    border-bottom: 1px solid #c9c9c9;
}

.field:first-child {
    min-height: 49px;
    border-top: 1px solid #c9c9c9;
}

.field.right {
    grid-column: 2;
}

.label {
    grid-column: 1 / 3;
    font-size: 11px;
    line-height: 14px;
    color: #444;
}

.field button {
    grid-column: 2;
    grid-row: 2;
    height: 14px;
    margin-top: 5px;
    color: #666;
}

.value {
    grid-row: 2;
    grid-column: 1;
    height: 29px;
    padding-top: 8px;
    font-size: 13px;
}

.value.check {
    height: 33px;
}

.value.person {
    grid-column: 1 / 3;
    height: 32px;
    padding-top: 6px;
    display: flex;
    gap: 6px;
    line-height: 20px;
}

.person svg {
    border-radius: 4px;
}

.value a {
    color: #0b5cab;
    text-decoration: none;
    border-bottom: 1px dotted #0b5cab;
}

.value input {
    appearance: none;
    display: block;
    width: 16px;
    height: 16px;
    margin: 3px 0 0;
    border: 1px solid #c9c9c9;
    border-radius: 2px;
    background-color: #f3f3f3;
}

.scrollbar {
    display: flex;
    flex-direction: column;
    align-items: center;
    width: 15px;
    padding: 4px 0 3px;
    background-color: #2c2c2c;
}

.track {
    flex: 1;
    display: flex;
    flex-direction: column;
    justify-content: flex-end;
    padding-bottom: 6px;
}

.thumb {
    width: 9px;
    height: 55%;
    border-radius: 5px;
    background-color: #9f9f9f;
}

.pointer {
    position: absolute;
    left: 722px;
    top: 668px;
}

/* Taskbar */
.taskbar {
    flex: none;
    display: grid;
    grid-template-columns: 1fr auto 1fr;
    height: 48px;
    background-color: #202121;
    color: #fff;
}

.task-left {
    display: flex;
    padding-left: 16px;
}

.task-center {
    display: flex;
    align-items: center;
}

.task {
    position: relative;
    width: 44px;
    height: 48px;
}

.task.open::after,
.task.current::after {
    content: "";
    position: absolute;
    bottom: 5px;
    width: 6px;
    height: 3px;
    border-radius: 2px;
    background-color: #9b9b9b;
}

.task.current {
    width: 40px;
    height: 40px;
    margin: 0 2px;
    border-radius: 4px;
    background-color: #313131;
}

.task.current::after {
    bottom: 1px;
    width: 16px;
    background-color: #5fb8ec;
}

.badge {
    position: absolute;
    left: 24px;
    top: 7px;
    width: 16px;
    height: 16px;
    border-radius: 8px;
    background-color: #bf360c;
    color: #f4d3c8;
    font-size: 11px;
}

.task.current .badge {
    left: 21px;
    top: 3px;
}

.task-search {
    display: flex;
    align-items: center;
    width: 219px;
    height: 32px;
    margin: 0 3px;
    padding: 0 10px;
    border: 1px solid #434343;
    border-radius: 16px;
    background-color: #3a3b3b;
}

.task-search input {
    flex: 1;
    min-width: 0;
    margin-left: 10px;
    padding: 0;
    border: none;
    outline: none;
    background: none;
    font: inherit;
    font-size: 13px;
}

.task-search input::placeholder {
    color: #cfcfcf;
    opacity: 1;
}

.tray {
    display: flex;
    align-items: center;
    justify-content: flex-end;
    padding-right: 20px;
}

.tray button {
    width: 26px;
}

.clock {
    width: 64px;
    text-align: right;
    font-size: 11px;
}

.notice {
    width: 16px;
    height: 16px;
    margin-left: 12px;
    border-radius: 8px;
    background-color: #4cc2ff;
    color: #15202d;
    font-size: 11px;
    text-align: center;
}
```
